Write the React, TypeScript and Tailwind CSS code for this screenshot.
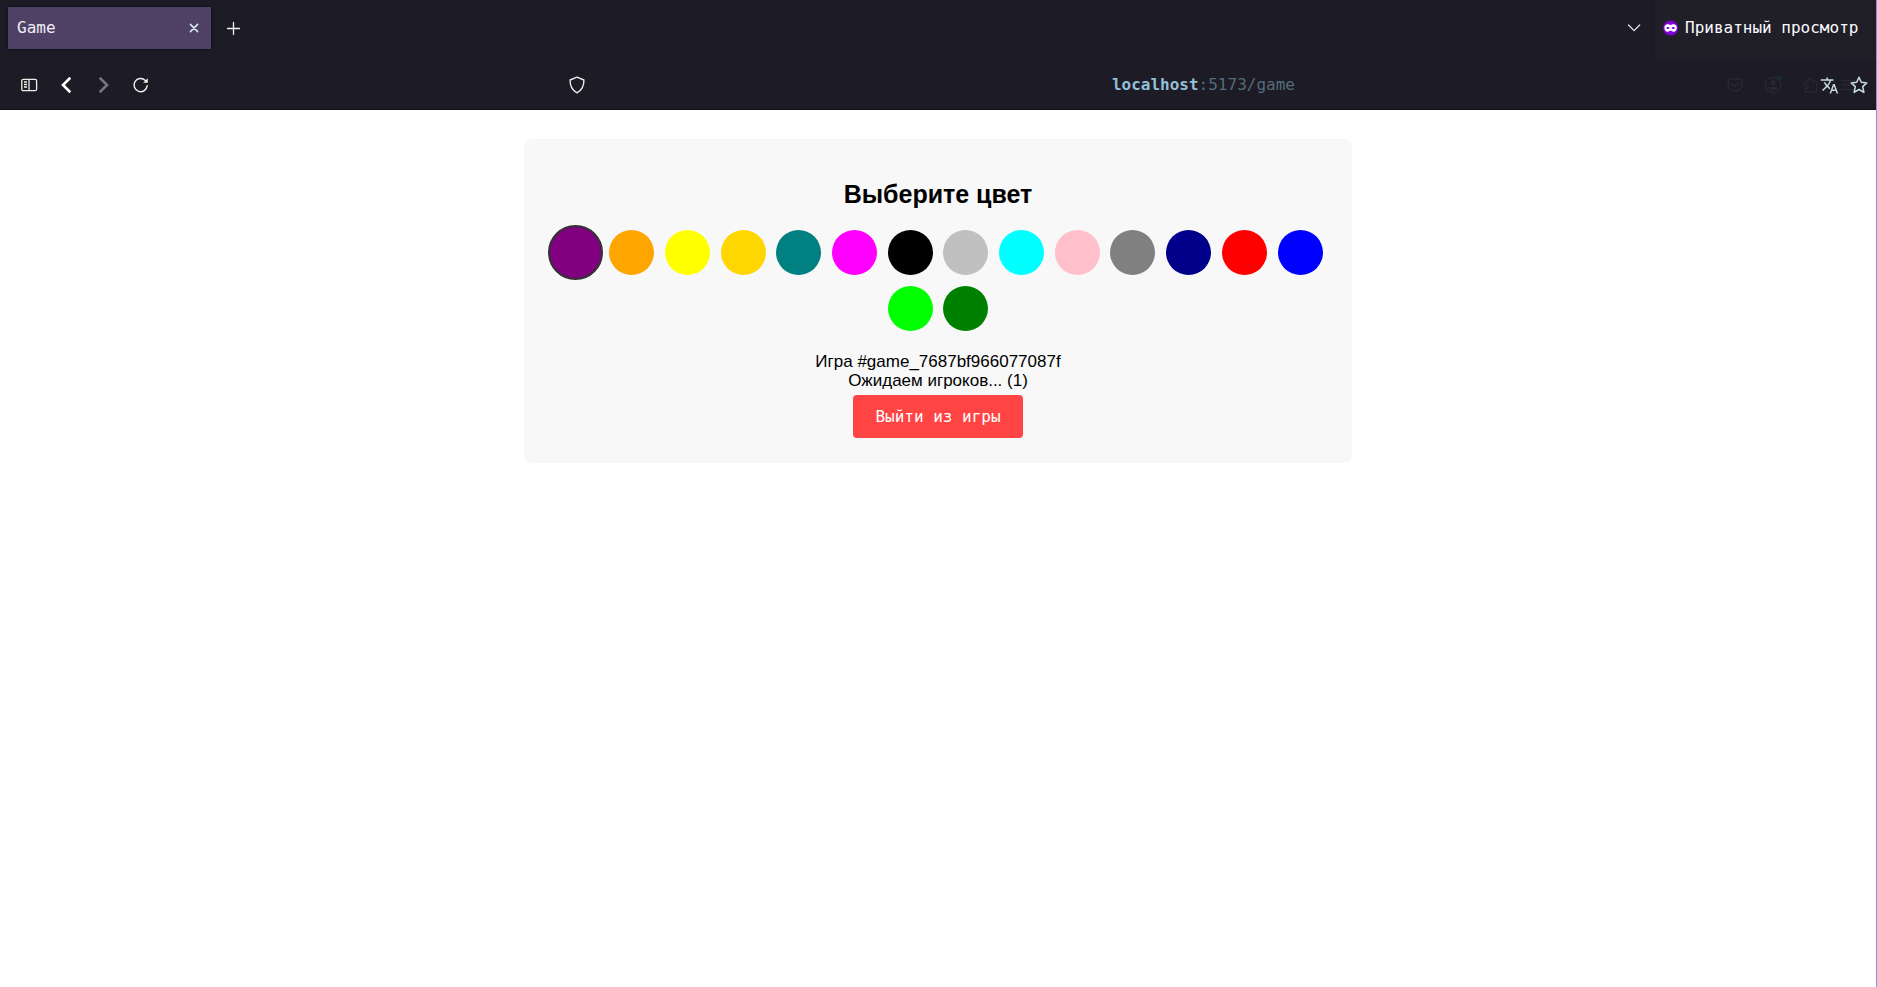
import { useState } from 'react';

const colors = [
  { name: 'purple', fill: 'bg-[#800080]' },
  { name: 'orange', fill: 'bg-[#ffa500]' },
  { name: 'yellow', fill: 'bg-[#ffff00]' },
  { name: 'gold', fill: 'bg-[#ffd700]' },
  { name: 'teal', fill: 'bg-[#008080]' },
  { name: 'magenta', fill: 'bg-[#ff00ff]' },
  { name: 'black', fill: 'bg-[#000000]' },
  { name: 'silver', fill: 'bg-[#c0c0c0]' },
  { name: 'cyan', fill: 'bg-[#00ffff]' },
  { name: 'pink', fill: 'bg-[#ffc0cb]' },
  { name: 'gray', fill: 'bg-[#808080]' },
  { name: 'darkblue', fill: 'bg-[#00008b]' },
  { name: 'red', fill: 'bg-[#ff0000]' },
  { name: 'blue', fill: 'bg-[#0000ff]' },
  { name: 'lime', fill: 'bg-[#00ff00]' },
  { name: 'green', fill: 'bg-[#008000]' },
];

function TabStrip() {
  return (
    <div className="flex h-[59px]">
      <div className="flex flex-1 items-center pb-[3px] pl-2">
        <div className="flex h-[42px] w-[203px] items-center justify-between bg-[#4f4166] px-[9px] text-[#f0eef4] shadow-[0_0_3px_rgba(0,0,0,0.5)]">
          <span>Game</span>
          <button aria-label="Close tab" className="flex size-4 items-center justify-center text-[#d8ecf2]">
            <svg viewBox="0 0 16 16" className="size-4" fill="none" stroke="currentColor" strokeWidth="1.5" strokeLinecap="round">
              <path d="M4.4 4.4l7.2 7.2M11.6 4.4l-7.2 7.2" />
            </svg>
          </button>
        </div>
        <button aria-label="New tab" className="ml-[14px] flex size-4 items-center justify-center text-[#f4f4f4]">
          <svg viewBox="0 0 16 16" className="size-4" fill="none" stroke="currentColor" strokeWidth="1.3" strokeLinecap="round">
            <path d="M8.5 2.500v12M2.500 8.500h12" />
          </svg>
        </button>
        <button aria-label="List all tabs" className="mr-[13px] ml-auto flex size-4 items-center justify-center text-[#e4e4e4]">
          <svg viewBox="0 0 16 16" className="size-4" fill="none" stroke="currentColor" strokeWidth="1.3" strokeLinecap="round" strokeLinejoin="round">
            <path d="M2.500 5l5.600 5.600L13.700 5" />
          </svg>
        </button>
      </div>
      <div className="flex w-[221px] items-center gap-[6px] bg-[#201f28] pb-[3px] pl-2 text-[#fbfbfe]">
        <svg viewBox="0 0 16 16" className="size-4" aria-hidden="true">
          <circle cx="7.6" cy="8" r="7.5" fill="#8000d7" />
          <path
            fill="#fff"
            fillRule="evenodd"
            d="M1.4 7.8c0-2.2 1.3-3.5 3.2-3.5 1.2 0 2 .6 3 .6s1.8-.6 3-.6c1.9 0 3.2 1.3 3.2 3.5 0 2.3-1.2 4-3.1 4-1.6 0-2.1-1.3-3.1-1.3s-1.5 1.3-3.1 1.3c-1.9 0-3.1-1.700-3.1-4zM3.2 7.900c.6.9 1.200 1.200 1.800 1.200.7 0 1.200-.4 1.600-1-.5-.8-1-1.100-1.700-1.100s-1.200.3-1.700.9zM8.600 8.100c.4.6.9 1 1.600 1 .6 0 1.200-.3 1.800-1.200-.5-.6-1-.9-1.700-.9s-1.200.3-1.700 1.100z"
          />
        </svg>
        <span className="whitespace-nowrap">Приватный просмотр</span>
      </div>
    </div>
  );
}

function HiddenActions() {
  return (
    <div className="absolute top-0 right-5 flex h-full items-center gap-[21px] pt-px text-[#282832]" aria-hidden="true">
      <svg viewBox="0 0 16 16" className="size-4" fill="none" stroke="currentColor" strokeWidth="1.4" strokeLinecap="round" strokeLinejoin="round">
        <path d="M2.5 2h11a1.3 1.3 0 0 1 1.3 1.3V7.5a6.8 6.8 0 0 1-13.600 0V3.3A1.3 1.3 0 0 1 2.5 2zM4.800 6.5L8 9.6l3.200-3.100" />
      </svg>
      <svg viewBox="0 0 18 18" className="size-[18px]">
        <circle cx="9" cy="9" r="7.8" fill="none" stroke="currentColor" strokeWidth="1.4" />
        <circle cx="9" cy="6.5" r="2.6" fill="currentColor" />
        <path d="M4.5 11h9c0 2-2 3.2-4.5 3.2S4.5 13 4.5 11z" fill="currentColor" />
        <circle cx="16" cy="2" r="2" fill="#182c38" />
      </svg>
      <svg viewBox="0 0 16 16" className="size-4" fill="none" stroke="currentColor" strokeWidth="1.4" strokeLinejoin="round">
        <path d="M2 4.500h3.500V3a1.800 1.800 0 0 1 3.600 0v1.500h3.700c.6 0 1 .4 1 1V14c0 .6-.4 1-1 1H2v-3.500h1.200a1.800 1.800 0 0 0 0-3.600H2z" />
      </svg>
      <svg viewBox="0 0 16 16" className="size-4" fill="none" stroke="currentColor" strokeWidth="1.4" strokeLinecap="round">
        <path d="M1.500 3.500h13M1.500 8h13M1.500 12.500h13" />
      </svg>
    </div>
  );
}

function Toolbar() {
  return (
    <div className="relative flex h-[51px] items-center pt-px shadow-[inset_0_-1px_0_#101017]">
      <HiddenActions />
      <div className="flex items-center pl-[10px]">
        <button aria-label="Sidebar" className="flex w-[37px] justify-center text-[#f0f0e8]">
          <svg viewBox="0 0 18 18" className="size-[18px]" fill="none" stroke="currentColor" strokeWidth="1.3">
            <rect x="1.8" y="3.3" width="14.8" height="11.4" rx="1.5" />
            <path d="M9 3.3v11.4M4 6h3M4 8.500h3M4 11h3" />
          </svg>
        </button>
        <button aria-label="Back" className="flex w-[37px] justify-center text-white">
          <svg viewBox="0 0 18 18" className="size-[18px]" fill="none" stroke="currentColor" strokeWidth="2.6">
            <path d="M13.300 1.800L6 9l7.300 7.200" />
          </svg>
        </button>
        <button aria-label="Forward" disabled className="flex w-[37px] justify-center text-[#76757c]">
          <svg viewBox="0 0 18 18" className="size-[18px]" fill="none" stroke="currentColor" strokeWidth="2.6">
            <path d="M5.700 1.800L13 9l-7.300 7.200" />
          </svg>
        </button>
        <button aria-label="Reload" className="flex w-[37px] justify-center text-[#f2f2ee]">
          <svg viewBox="0 0 18 18" className="size-[18px]" fill="none" stroke="currentColor" strokeWidth="1.4" strokeLinecap="round">
            <path d="M16.200 9.600a6.600 6.600 0 1 1-1.900-5.200l1 1" />
            <path d="M16.800 2.200v4.600h-4.600z" fill="currentColor" stroke="none" />
          </svg>
        </button>
      </div>
      <div className="relative ml-auto flex w-[70%] items-center pr-[3px]">
        <button aria-label="Tracking protection" className="flex w-[29px] justify-center text-[#ecece6]">
          <svg viewBox="0 0 18 18" className="size-[18px]" fill="none" stroke="currentColor" strokeWidth="1.4" strokeLinejoin="round">
            <path d="M9 1.200l6.900 2.800c.2 5.600-1.300 9.800-6.900 12.900C3.400 13.800 1.900 9.600 2.100 4z" />
          </svg>
        </button>
        <div
          role="textbox"
          aria-label="Address"
          contentEditable
          suppressContentEditableWarning
          spellCheck={false}
          className="flex-1 text-center text-[#566b7b] outline-none"
        >
          <span className="font-bold text-[#93bfd8]">localhost</span>:5173/game
        </div>
        <button aria-label="Translate page" className="flex w-[29px] justify-center text-[#c6dde2]">
          <svg viewBox="0 0 24 24" className="size-[19px]" fill="currentColor">
            <path d="M12.870 15.070l-2.540-2.510.03-.03A17.520 17.520 0 0 0 14.070 6H17V4h-7V2H8v2H1v1.990h11.170C11.500 7.920 10.440 9.750 9 11.350 8.070 10.320 7.300 9.190 6.690 8h-2c.73 1.630 1.730 3.170 2.980 4.560l-5.090 5.020L4 19l5-5 3.110 3.110.76-2.040zM18.500 10h-2L12 22h2l1.120-3h4.750L21 22h2l-4.500-12zm-2.620 7l1.620-4.330L19.120 17h-3.240z" />
          </svg>
        </button>
        <button aria-label="Bookmark this page" className="flex w-[29px] justify-center text-[#c6dde2]">
          <svg viewBox="0 0 18 18" className="size-[18px]" fill="none" stroke="currentColor" strokeWidth="1.5" strokeLinejoin="round">
            <path d="M9 1.300l2.300 5 5.500.6-4.100 3.700 1.200 5.800L9 13.500l-4.900 2.900 1.200-5.800L1.200 6.900l5.500-.6z" />
          </svg>
        </button>
      </div>
    </div>
  );
}

export default function App() {
  const [selected, setSelected] = useState('purple');

  return (
    <div className="flex min-h-screen flex-col border-r border-[#7f92dc] bg-white">
      <header className="bg-[#1c1b26] font-['DejaVu_Sans_Mono',monospace] text-base">
        <TabStrip />
        <Toolbar />
      </header>
      <main className="px-4 pt-[29px] font-['Liberation_Sans',sans-serif] text-black">
        <section className="mx-auto flex max-w-[828px] flex-col items-center rounded-lg bg-[#f8f8f8] px-6 pt-[41px] pb-[25px]">
          <h2 className="text-[25px] leading-[29px] font-bold">Выберите цвет</h2>
          <div className="mt-[15px] flex w-full flex-wrap justify-center">
            {colors.map((color) => (
              <div key={color.name} className="flex h-14 w-1/14 items-center justify-center">
                <button
                  aria-label={color.name}
                  aria-pressed={selected === color.name}
                  onClick={() => setSelected(color.name)}
                  className={`shrink-0 cursor-pointer rounded-full ${color.fill} ${
                    selected === color.name ? 'size-[55px] border-2 border-[#333333]' : 'size-[45px]'
                  }`}
                />
              </div>
            ))}
          </div>
          <p className="mt-4 text-[17px] leading-[19px]">Игра #game_7687bf966077087f</p>
          <p className="text-[17px] leading-[19px]">Ожидаем игроков... (1)</p>
          <button className="mt-[5px] h-[43px] cursor-pointer rounded bg-[#ff4444] px-[22px] font-['DejaVu_Sans_Mono',monospace] text-base text-white">
            Выйти из игры
          </button>
        </section>
      </main>
    </div>
  );
}
